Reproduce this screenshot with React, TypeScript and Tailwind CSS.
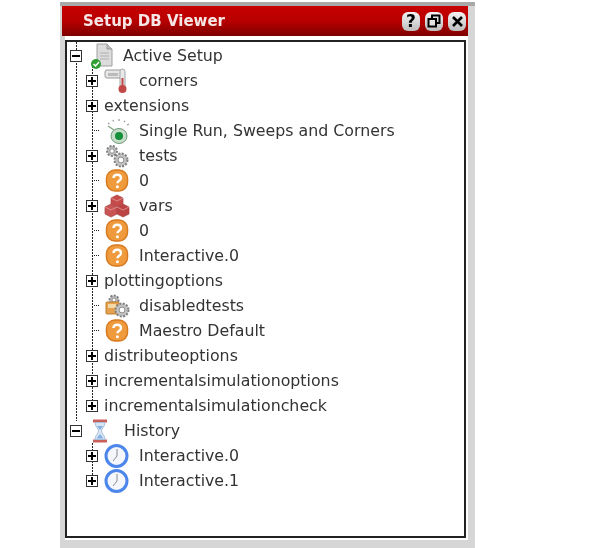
type IconName = "doc" | "thermo" | "run" | "gears" | "help" | "cubes" | "foldergears" | "hourglass" | "clock";

type Row = {
  label: string;
  expander?: "plus" | "minus";
  icon?: IconName;
  top?: boolean;
};

const rows: Row[] = [
  { label: "Active Setup", expander: "minus", icon: "doc", top: true },
  { label: "corners", expander: "plus", icon: "thermo" },
  { label: "extensions", expander: "plus" },
  { label: "Single Run, Sweeps and Corners", icon: "run" },
  { label: "tests", expander: "plus", icon: "gears" },
  { label: "0", icon: "help" },
  { label: "vars", expander: "plus", icon: "cubes" },
  { label: "0", icon: "help" },
  { label: "Interactive.0", icon: "help" },
  { label: "plottingoptions", expander: "plus" },
  { label: "disabledtests", icon: "foldergears" },
  { label: "Maestro Default", icon: "help" },
  { label: "distributeoptions", expander: "plus" },
  { label: "incrementalsimulationoptions", expander: "plus" },
  { label: "incrementalsimulationcheck", expander: "plus" },
  { label: "History", expander: "minus", icon: "hourglass", top: true },
  { label: "Interactive.0", expander: "plus", icon: "clock" },
  { label: "Interactive.1", expander: "plus", icon: "clock" },
];

const Gear = ({ cx, cy, r }: { cx: number; cy: number; r: number }) => (
  <g>
    <circle cx={cx} cy={cy} r={r} fill="#c2c2c2" stroke="#808080" strokeWidth="2" strokeDasharray="2 1.4" />
    <circle cx={cx} cy={cy} r={r * 0.45} fill="#fff" stroke="#8c8c8c" strokeWidth="1" />
  </g>
);

const TreeIcon = ({ name }: { name: IconName }) => {
  switch (name) {
    case "doc":
      return (
        <svg width="24" height="26" viewBox="0 0 24 26">
          <path d="M7 1h10l5 5v17H7z" fill="#dcdcdc" stroke="#a0a0a0" />
          <path d="M17 1v5h5" fill="#c0c0c0" stroke="#999" />
          <path d="M10 10h9M10 13h9M10 16h9" stroke="#b0b0b0" />
          <circle cx="6" cy="21" r="5" fill="#2f9e35" />
          <path d="M3.500 21l2 2 3.500-4" fill="none" stroke="#fff" strokeWidth="1.500" />
        </svg>
      );
    case "thermo":
      return (
        <svg width="25" height="26" viewBox="0 0 25 26">
          <rect x="1" y="2" width="17" height="8" rx="2" fill="#e6e6e6" stroke="#9a9a9a" />
          <rect x="4" y="5" width="10" height="3" fill="#bbb" />
          <rect x="16" y="1" width="5" height="19" rx="2.500" fill="#e8e8e8" stroke="#a5a5a5" />
          <rect x="17.500" y="10" width="2" height="10" fill="#c24848" />
          <circle cx="18.500" cy="21" r="4" fill="#c24848" />
        </svg>
      );
    case "run":
      return (
        <svg width="26" height="26" viewBox="0 0 26 26">
          <path d="M3 5l1.500 1M8 2l.5 1.500M14 1v2M20 3l-1 1M24 6l-2 1" stroke="#999" strokeWidth="1.300" />
          <path d="M3 8l6 4" stroke="#8aa88a" strokeWidth="1.500" />
          <ellipse cx="14" cy="18" rx="8" ry="7.500" fill="#c7dcc9" stroke="#6f9c78" />
          <circle cx="14" cy="18" r="4" fill="#14903a" />
        </svg>
      );
    case "gears":
      return (
        <svg width="26" height="26" viewBox="0 0 26 26">
          <Gear cx={8} cy={8} r={5} />
          <Gear cx={17} cy={17} r={6.500} />
        </svg>
      );
    case "help":
      return (
        <svg width="24" height="24" viewBox="0 0 24 24">
          <rect x="1.500" y="1" width="21" height="21" rx="8.500" fill="#ef9a3c" stroke="#d77a20" strokeWidth="1.500" />
          <path d="M8.500 9c0-4.400 7.500-4.400 7.500 0 0 3-3.500 2.600-3.500 5.200" fill="none" stroke="#fff" strokeWidth="2.400" />
          <circle cx="12.400" cy="17.700" r="1.500" fill="#fff" />
        </svg>
      );
    case "cubes":
      return (
        <svg width="26" height="24" viewBox="0 0 26 24">
          <path d="M13 1l6 3v6l-6 3-6-3V4z" fill="#c64a4a" stroke="#a94545" strokeWidth=".7" />
          <path d="M7 10l6 3v7l-6 3-6-3v-7z" fill="#c95454" stroke="#a94545" strokeWidth=".7" />
          <path d="M19 10l6 3v7l-6 3-6-3v-7z" fill="#bc4343" stroke="#a94545" strokeWidth=".7" />
          <path d="M7 4l6 3 6-3M1 13l6 3 6-3 6 3 6-3" fill="none" stroke="#e29a9a" strokeWidth=".8" />
        </svg>
      );
    case "foldergears":
      return (
        <svg width="26" height="26" viewBox="0 0 26 26">
          <Gear cx={9} cy={7} r={4.500} />
          <rect x="1" y="9" width="13" height="12" rx="1" fill="#e5a24e" stroke="#c07c2c" />
          <rect x="3" y="11" width="8" height="4" fill="#f4d9a8" />
          <Gear cx={17} cy={17} r={6.500} />
        </svg>
      );
    case "hourglass":
      return (
        <svg width="16" height="24" viewBox="0 0 16 24">
          <rect x="1" y="0.500" width="14" height="3" fill="#c9605a" />
          <rect x="1" y="20.500" width="14" height="3" fill="#c9605a" />
          <path d="M3 3.500h10c0 4-3.500 6-3.500 8.500s3.500 4.500 3.500 8.500H3c0-4 3.500-6 3.500-8.500S3 7.500 3 3.500z" fill="#d8e6f6" stroke="#a9bfdc" />
          <path d="M5 7h6l-3 4zM4.500 19.500L8 15l3.500 4.500z" fill="#87aee0" />
        </svg>
      );
    case "clock":
      return (
        <svg width="25" height="26" viewBox="0 0 25 26">
          <circle cx="12.500" cy="13" r="10.500" fill="#f4f6fb" stroke="#4d86ea" strokeWidth="3" />
          <path d="M13 6v7l-4 5" fill="none" stroke="#8a8a8a" strokeWidth="1" />
        </svg>
      );
  }
};

const Expander = ({ type }: { type: "plus" | "minus" }) => (
  <span className="relative z-10 flex h-3 w-3 shrink-0 items-center justify-center border border-[#333] bg-white">
    <span className="absolute h-[2px] w-2 bg-black" />
    {type === "plus" && <span className="absolute h-2 w-[2px] bg-black" />}
  </span>
);

const TitleButton = ({ children }: { children: React.ReactNode }) => (
  <span className="flex h-[19px] w-[18px] items-center justify-center rounded-[6px] bg-gradient-to-b from-[#f4f4f4] to-[#bdbdbd]">
    {children}
  </span>
);

const TreeRow = ({ row }: { row: Row }) => {
  if (row.top) {
    const isHistory = row.icon === "hourglass";
    return (
      <div className="flex h-[25px] items-center pl-[3px]">
        {row.expander && <Expander type={row.expander} />}
        <span className={isHistory ? "ml-[10px] flex w-[32px] items-center" : "ml-[8px] flex w-[33px] items-center"}>
          {row.icon && <TreeIcon name={row.icon} />}
        </span>
        <span>{row.label}</span>
      </div>
    );
  }
  return (
    <div className="flex h-[25px] items-center pl-[19px]">
      {row.expander ? (
        <Expander type={row.expander} />
      ) : (
        <span className="ml-[8px] h-0 w-[5px] shrink-0 border-t border-dotted border-[#222]" />
      )}
      {row.icon ? (
        <>
          <span className={row.expander ? "ml-[6px] flex w-[35px] items-center" : "ml-[6px] flex w-[34px] items-center"}>
            <TreeIcon name={row.icon} />
          </span>
          <span>{row.label}</span>
        </>
      ) : (
        <span className="ml-[6px]">{row.label}</span>
      )}
    </div>
  );
};

export default function App() {
  return (
    <div className="h-[548px] w-[603px] overflow-hidden bg-white pt-[2px] font-['DejaVu_Sans',sans-serif] blur-[0.55px]">
      <div className="ml-[60px] flex h-[546px] w-[415px] flex-col border-t-[4px] border-[#a8a8a8] bg-[#d6d6d6] pb-[8px] pl-[2px] pr-[7px]">
        <div className="flex h-[30px] shrink-0 items-center bg-gradient-to-b from-[#c80000] via-[#b80000] to-[#7e0000] pl-[21px] pr-[2px]">
          <span className="text-[15px] font-bold text-[#f6e6e6]">Setup DB Viewer</span>
          <span className="ml-auto flex items-center gap-[5px]">
            <TitleButton>
              <span className="text-[17px] leading-none font-bold text-black">?</span>
            </TitleButton>
            <TitleButton>
              <svg width="14" height="14" viewBox="0 0 14 14" fill="none" stroke="#000" strokeWidth="2">
                <rect x="5" y="1.500" width="7.500" height="7.500" />
                <rect x="1.500" y="5" width="7.500" height="7.500" fill="#e4e4e4" />
              </svg>
            </TitleButton>
            <TitleButton>
              <svg width="13" height="13" viewBox="0 0 13 13" stroke="#000" strokeWidth="2.600">
                <path d="M2 2l9 9M11 2l-9 9" />
              </svg>
            </TitleButton>
          </span>
        </div>
        <div className="ml-[3px] flex flex-1 flex-col bg-white pt-[4px] pr-[2px] pb-[2px]">
          <div className="relative flex-1 border-2 border-[#222] pt-[1px] text-[15.8px] text-[#333]">
            <span className="absolute top-0 left-[9px] h-[379px] w-[1px] bg-[repeating-linear-gradient(to_bottom,#222_0,#222_2px,transparent_2px,transparent_3px)]" />
            <span className="absolute top-[24px] left-[25px] h-[340px] w-[1px] bg-[repeating-linear-gradient(to_bottom,#222_0,#222_2px,transparent_2px,transparent_3px)]" />
            <span className="absolute top-[401px] left-[25px] h-[32px] w-[1px] bg-[repeating-linear-gradient(to_bottom,#222_0,#222_2px,transparent_2px,transparent_3px)]" />
            <div className="relative">
              {rows.map((row, i) => (
                <TreeRow key={i} row={row} />
              ))}
            </div>
          </div>
        </div>
      </div>
    </div>
  );
}
